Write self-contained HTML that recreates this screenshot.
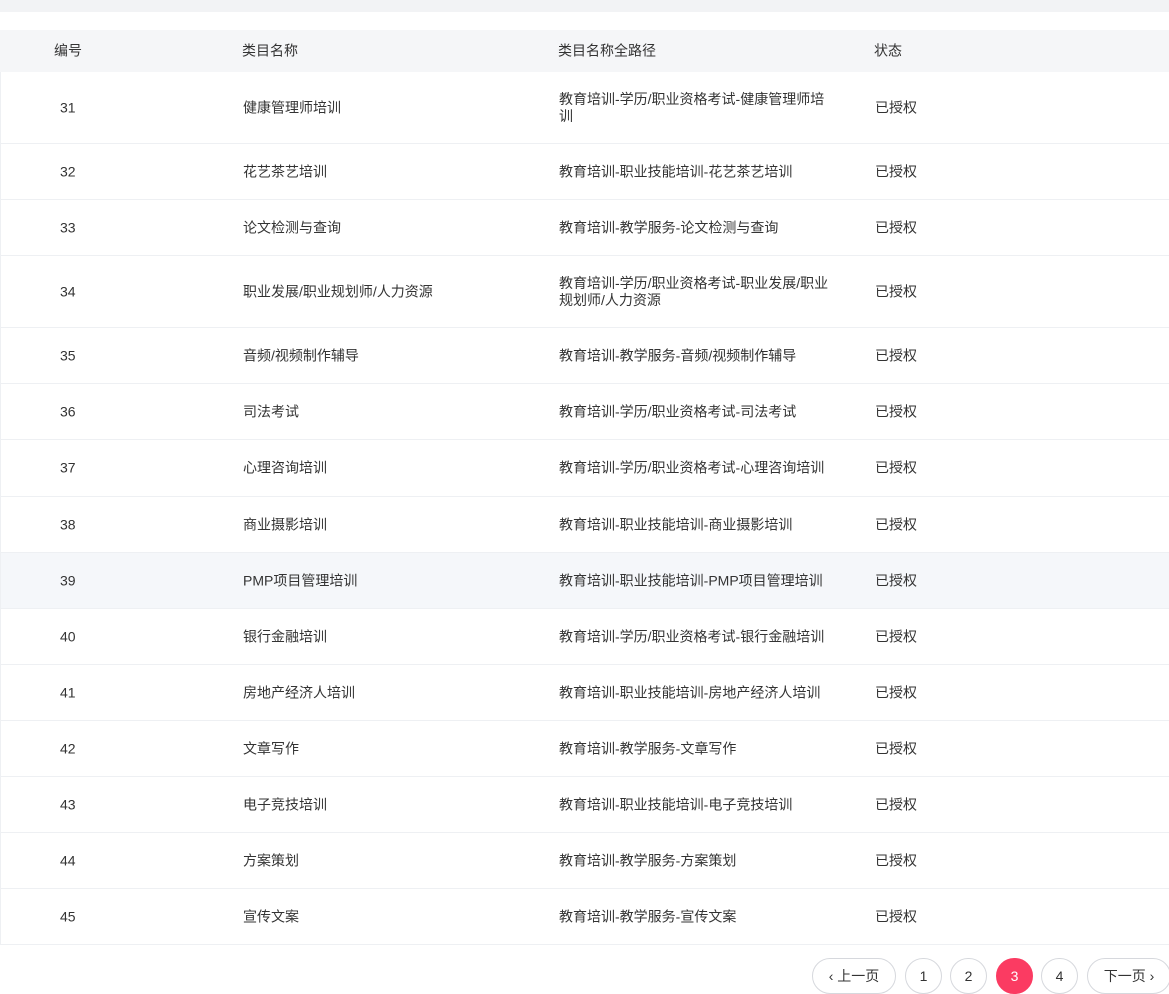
<!DOCTYPE html>
<html><head><meta charset="utf-8"><style>
*{margin:0;padding:0;box-sizing:border-box}
body{width:1169px;height:994px;overflow:hidden;background:#fff;font-family:"Liberation Sans","Noto Sans CJK SC",sans-serif;font-size:14px;color:#333;position:relative}
.top{height:12px;background:#f2f3f5}
.row{position:absolute;left:0;width:1169px;border-bottom:1px solid #eef0f3;border-left:1px solid #eef0f3}
.row div{position:absolute;top:50%;transform:translateY(-50%);line-height:17px}
.c1{left:59px}.c2{left:242px}.c3{left:558px;width:278px}.c4{left:874px}
.hd{background:#f5f6f8;border:none}
.hd .c1{left:54px}
.pg{position:absolute;top:958px;height:36px;border:1px solid #d6d8dd;border-radius:18px;text-align:center;line-height:34px;font-size:14px;color:#333;background:#fff}
.on{background:#fb3b62;border-color:#fb3b62;color:#fff}
</style></head><body>
<div class="top"></div>
<div class="row hd" style="top:30px;height:42px"><div class="c1">编号</div><div class="c2">类目名称</div><div class="c3">类目名称全路径</div><div class="c4">状态</div></div>
<div class="row" style="top:72px;height:72px"><div class="c1">31</div><div class="c2">健康管理师培训</div><div class="c3">教育培训-学历/职业资格考试-健康管理师培训</div><div class="c4">已授权</div></div>
<div class="row" style="top:144px;height:56px"><div class="c1">32</div><div class="c2">花艺茶艺培训</div><div class="c3">教育培训-职业技能培训-花艺茶艺培训</div><div class="c4">已授权</div></div>
<div class="row" style="top:200px;height:56px"><div class="c1">33</div><div class="c2">论文检测与查询</div><div class="c3">教育培训-教学服务-论文检测与查询</div><div class="c4">已授权</div></div>
<div class="row" style="top:256px;height:72px"><div class="c1">34</div><div class="c2">职业发展/职业规划师/人力资源</div><div class="c3">教育培训-学历/职业资格考试-职业发展/职业规划师/人力资源</div><div class="c4">已授权</div></div>
<div class="row" style="top:328px;height:56px"><div class="c1">35</div><div class="c2">音频/视频制作辅导</div><div class="c3">教育培训-教学服务-音频/视频制作辅导</div><div class="c4">已授权</div></div>
<div class="row" style="top:384px;height:56px"><div class="c1">36</div><div class="c2">司法考试</div><div class="c3">教育培训-学历/职业资格考试-司法考试</div><div class="c4">已授权</div></div>
<div class="row" style="top:440px;height:57px"><div class="c1">37</div><div class="c2">心理咨询培训</div><div class="c3">教育培训-学历/职业资格考试-心理咨询培训</div><div class="c4">已授权</div></div>
<div class="row" style="top:497px;height:56px"><div class="c1">38</div><div class="c2">商业摄影培训</div><div class="c3">教育培训-职业技能培训-商业摄影培训</div><div class="c4">已授权</div></div>
<div class="row" style="top:553px;height:56px;background:#f5f7fa"><div class="c1">39</div><div class="c2">PMP项目管理培训</div><div class="c3">教育培训-职业技能培训-PMP项目管理培训</div><div class="c4">已授权</div></div>
<div class="row" style="top:609px;height:56px"><div class="c1">40</div><div class="c2">银行金融培训</div><div class="c3">教育培训-学历/职业资格考试-银行金融培训</div><div class="c4">已授权</div></div>
<div class="row" style="top:665px;height:56px"><div class="c1">41</div><div class="c2">房地产经济人培训</div><div class="c3">教育培训-职业技能培训-房地产经济人培训</div><div class="c4">已授权</div></div>
<div class="row" style="top:721px;height:56px"><div class="c1">42</div><div class="c2">文章写作</div><div class="c3">教育培训-教学服务-文章写作</div><div class="c4">已授权</div></div>
<div class="row" style="top:777px;height:56px"><div class="c1">43</div><div class="c2">电子竞技培训</div><div class="c3">教育培训-职业技能培训-电子竞技培训</div><div class="c4">已授权</div></div>
<div class="row" style="top:833px;height:56px"><div class="c1">44</div><div class="c2">方案策划</div><div class="c3">教育培训-教学服务-方案策划</div><div class="c4">已授权</div></div>
<div class="row" style="top:889px;height:56px"><div class="c1">45</div><div class="c2">宣传文案</div><div class="c3">教育培训-教学服务-宣传文案</div><div class="c4">已授权</div></div>
<div class="pg" style="left:812px;width:84px">‹ 上一页</div>
<div class="pg" style="left:905px;width:37px">1</div>
<div class="pg" style="left:950px;width:37px">2</div>
<div class="pg on" style="left:996px;width:37px">3</div>
<div class="pg" style="left:1041px;width:37px">4</div>
<div class="pg" style="left:1087px;width:84px">下一页 ›</div>
</body></html>
